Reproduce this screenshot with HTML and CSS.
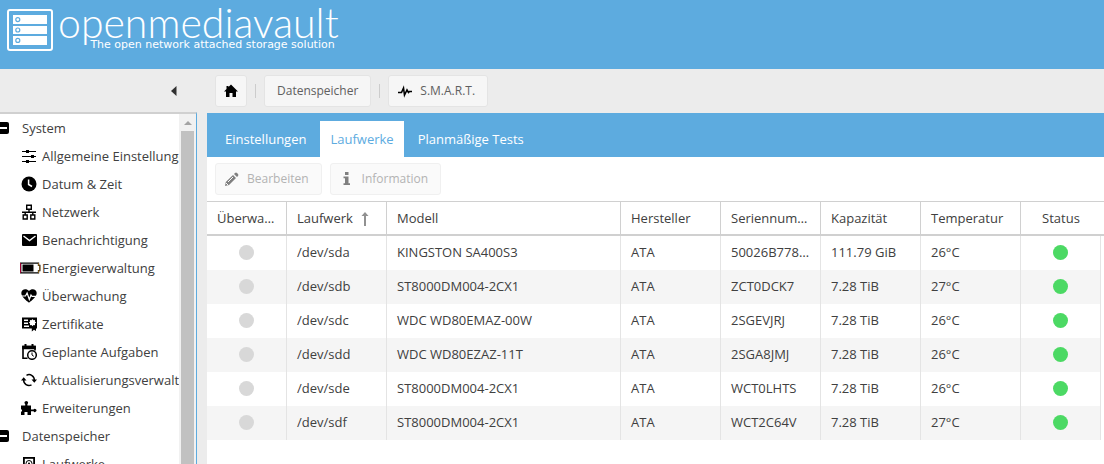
FILE: index.html
```html
<!DOCTYPE html>
<html lang="de">
<head>
<meta charset="utf-8">
<title>openmediavault</title>
<link rel="stylesheet" href="styles.css">
</head>
<body>
<header class="banner">
  <svg class="banner-logo" width="46" height="42" viewBox="0 0 46 42" aria-hidden="true">
    <rect x="1" y="1" width="44" height="40" rx="2" fill="none" stroke="#fff" stroke-width="2"/>
    <g fill="#fff"><rect x="6" y="6" width="34" height="9"/><rect x="6" y="17" width="34" height="8"/><rect x="6" y="27" width="34" height="9"/></g>
    <g fill="#fff" stroke="#5dabdf" stroke-width="1.2"><circle cx="10.8" cy="10.6" r="2"/><circle cx="10.8" cy="21" r="2"/><circle cx="10.8" cy="31.4" r="2"/></g>
  </svg>
  <div class="brand">
    <span class="brand-name">openmediavault</span>
    <span class="brand-tagline">The open network attached storage solution</span>
  </div>
</header>
<div class="workspace">
  <aside class="sidebar">
    <div class="sidebar-head">
      <button class="collapse" aria-label="Navigation einklappen"><svg width="6" height="10" viewBox="0 0 6 10"><path d="M5.5 0v10L0 5z" fill="#303030"/></svg></button>
    </div>
    <div class="tree-frame">
      <nav class="tree">
        <div class="group"><button class="toggle" aria-label="System zuklappen"></button>System</div>
        <a class="item" href="#"><svg class="icon" viewBox="0 0 16 16"><path d="M1 3.5h14M1 8.5h14M1 13.5h14" stroke="#000" stroke-width="1.2"/><path d="M5 2h3v3H5zM10 7h3v3h-3zM5 12h3v3H5z"/></svg>Allgemeine Einstellungen</a>
        <a class="item" href="#"><svg class="icon" viewBox="0 0 16 16"><circle cx="8" cy="8" r="7.5"/><path d="M7.6 3.5v5l3.4 2" fill="none" stroke="#fff" stroke-width="1.5"/></svg>Datum &amp; Zeit</a>
        <a class="item" href="#"><svg class="icon" viewBox="0 0 16 16"><g fill="none" stroke="#000" stroke-width="1.4"><path d="M5.7 1.2h4.6v4H5.7zM2.2 11h4v4h-4zM9.8 11h4v4h-4zM8 5v3M1 8.2h14M4.2 8v3M11.8 8v3"/></g></svg>Netzwerk</a>
        <a class="item" href="#"><svg class="icon" viewBox="0 0 16 16"><rect x="1" y="2" width="15" height="12" rx="1"/><path d="M2.5 4 8.5 8.5 14.5 4" fill="none" stroke="#fff" stroke-width="1.4"/></svg>Benachrichtigung</a>
        <a class="item" href="#"><svg class="icon icon-wide" viewBox="0 0 22 16"><path d="M.7 3.2h17.8v2.2h1.3v5.2h-1.3v2.2H.7z" fill="#fff" stroke="#000" stroke-width="1.3"/><path d="M.5 3v10" stroke="#a00030"/><path d="M18.5 3v2.5l1.3.3v4.5l-1.3.3V13" fill="none" stroke="#b98220" stroke-width=".7"/><path d="M2.5 4.5h11v7h-11z"/></svg>Energieverwaltung</a>
        <a class="item" href="#"><svg class="icon" viewBox="0 0 16 16"><path d="M8 14.8C5.5 12.8.3 9 .3 5.1.3.9 5.5-.1 8 3c2.5-3.1 7.7-2.1 7.7 2.1 0 3.9-5.2 7.7-7.7 9.7z"/><path d="M0 8h4.5l1.6-3 2.2 6.5L10 7l1 1.3h5" fill="none" stroke="#fff" stroke-width="1.2"/></svg>Überwachung</a>
        <a class="item" href="#"><svg class="icon" viewBox="0 0 16 16"><path d="M1 1.5h15v11h-1V15l-2-1.3-2.2 1.8v-3H1z"/><path d="M3 4.2h4M3 7.2h4M3 10.2h5" stroke="#fff" stroke-width="1.5"/><path d="m11.5 3 1 1.3 1.6-.3-.2 1.6 1.3 1-1.3 1 .2 1.6-1.6-.2-1 1.3-1-1.3-1.6.2.2-1.6-1.3-1 1.3-1-.2-1.6 1.6.3z" fill="#fff"/></svg>Zertifikate</a>
        <a class="item" href="#"><svg class="icon" viewBox="0 0 16 16"><path d="M6.5 14.2H2V2.5h12v4" fill="none" stroke="#000" stroke-width="1.6"/><path d="M1.2 1.7h13.6v3.5H1.2zM3.5 0h2v3h-2zM10.5 0h2v3h-2z"/><circle cx="11" cy="11" r="4.3" fill="#fff" stroke="#000" stroke-width="1.5"/><path d="M11 8.5V11l1.8 1.3" fill="none" stroke="#000"/></svg>Geplante Aufgaben</a>
        <a class="item" href="#"><svg class="icon" viewBox="0 0 16 16"><g fill="none" stroke="#000" stroke-width="1.5"><path d="M5.5 3.3a5.3 5.3 0 0 1 7.8 5.2M10.5 12.9a5.3 5.3 0 0 1-7.8-5.2"/></g><path d="M10.5 7.6H16l-2.7 3.2zM0 8.4h5.5L2.7 5.2z"/></svg>Aktualisierungsverwaltung</a>
        <a class="item" href="#"><svg class="icon" viewBox="0 0 16 16"><path d="M0 5.5h4.2V4a1.7 1.7 0 1 1 2.2 0v1.5H10v4h2.5a1.6 1.6 0 1 1 0 1.8H10V15H6.5v-3h-3v3H0v-3.5h1v-2H0z"/></svg>Erweiterungen</a>
        <div class="group"><button class="toggle" aria-label="Datenspeicher zuklappen"></button>Datenspeicher</div>
        <a class="item" href="#"><svg class="icon" viewBox="0 0 16 16"><rect x="2.9" y="1.9" width="10.2" height="13" fill="none" stroke="#000" stroke-width="1.8"/><circle cx="8" cy="7.5" r="3" fill="none" stroke="#000"/><circle cx="8" cy="7.5" r="1"/></svg>Laufwerke</a>
      </nav>
      <div class="scroll-track" aria-hidden="true"><span class="scroll-up"></span><span class="scroll-thumb"></span></div>
    </div>
  </aside>
  <main class="content">
    <nav class="crumbs">
      <button class="btn btn-home" aria-label="Startseite"><svg width="16" height="16" viewBox="0 0 16 16"><path d="M8 1.5 15 8.5h-2V14H9.5v-4h-3v4H3V8.5H1L3.500 6V3h2v1z"/></svg></button>
      <span class="divider"></span>
      <button class="btn">Datenspeicher</button>
      <span class="divider"></span>
      <button class="btn btn-icon"><svg width="16" height="16" viewBox="0 0 16 16"><path d="M1 9.5h3.500L6.500 5l1 7L10 7l1.500 2.500 1-1H15" fill="none" stroke="#000" stroke-width="1.600"/></svg>S.M.A.R.T.</button>
    </nav>
    <section class="panel">
      <div class="tabs" role="tablist">
        <button class="tab" role="tab">Einstellungen</button>
        <button class="tab tab-active" role="tab" aria-selected="true">Laufwerke</button>
        <button class="tab" role="tab">Planmäßige Tests</button>
      </div>
      <div class="toolbar">
        <button class="btn btn-icon" disabled><svg width="16" height="16" viewBox="0 0 16 16"><path d="m1 15 .8-4L9 4l3 3-7 7zM10 3l1-1q1-.8 2 0l1 1q.8 1 0 2l-1 1z"/><path d="m2 12 2 2M4 11l5-5" stroke="#fafafa"/></svg>Bearbeiten</button>
        <button class="btn btn-icon" disabled><svg width="16" height="16" viewBox="0 0 16 16"><path d="M6 1h3.500v3H6zM4.500 5.500h5v6.700H11V14H4.500v-1.800H6V7.300H4.500z"/></svg>Information</button>
      </div>
      <table class="grid">
        <colgroup><col class="w-narrow"><col class="w-mid"><col><col class="w-mid"><col class="w-mid"><col class="w-mid"><col class="w-mid"><col class="w-narrow"><col class="w-gutter"></colgroup>
        <thead><tr><th>Überwacht</th><th>Laufwerk <svg class="sort" width="8" height="14" viewBox="0 0 8 14"><path d="M4 0 7.500 4H5v10H3V4H.5z" fill="#919191"/></svg></th><th>Modell</th><th>Hersteller</th><th>Seriennummer</th><th>Kapazität</th><th>Temperatur</th><th class="center">Status</th><td class="gutter"></td></tr></thead>
        <tbody>
          <tr><td class="center"><span class="dot"></span></td><td>/dev/sda</td><td>KINGSTON SA400S3</td><td>ATA</td><td>50026B7782A1</td><td>111.79 GiB</td><td>26°C</td><td class="center"><span class="dot dot-good"></span></td><td class="gutter"></td></tr>
          <tr><td class="center"><span class="dot"></span></td><td>/dev/sdb</td><td>ST8000DM004-2CX1</td><td>ATA</td><td>ZCT0DCK7</td><td>7.28 TiB</td><td>27°C</td><td class="center"><span class="dot dot-good"></span></td><td class="gutter"></td></tr>
          <tr><td class="center"><span class="dot"></span></td><td>/dev/sdc</td><td>WDC WD80EMAZ-00W</td><td>ATA</td><td>2SGEVJRJ</td><td>7.28 TiB</td><td>26°C</td><td class="center"><span class="dot dot-good"></span></td><td class="gutter"></td></tr>
          <tr><td class="center"><span class="dot"></span></td><td>/dev/sdd</td><td>WDC WD80EZAZ-11T</td><td>ATA</td><td>2SGA8JMJ</td><td>7.28 TiB</td><td>26°C</td><td class="center"><span class="dot dot-good"></span></td><td class="gutter"></td></tr>
          <tr><td class="center"><span class="dot"></span></td><td>/dev/sde</td><td>ST8000DM004-2CX1</td><td>ATA</td><td>WCT0LHTS</td><td>7.28 TiB</td><td>26°C</td><td class="center"><span class="dot dot-good"></span></td><td class="gutter"></td></tr>
          <tr><td class="center"><span class="dot"></span></td><td>/dev/sdf</td><td>ST8000DM004-2CX1</td><td>ATA</td><td>WCT2C64V</td><td>7.28 TiB</td><td>27°C</td><td class="center"><span class="dot dot-good"></span></td><td class="gutter"></td></tr>
        </tbody>
      </table>
    </section>
  </main>
</div>
</body>
</html>
```
FILE: styles.css
```css
* { box-sizing: border-box; }
body {
  margin: 0;
  height: 100vh;
  overflow: hidden;
  display: flex;
  flex-direction: column;
  background: #ececec;
  color: #404040;
  font: 13px/20px "Open Sans", sans-serif;
}
button { font: inherit; margin: 0; }

.banner {
  flex: none;
  display: flex;
  align-items: flex-start;
  gap: 5px;
  padding: 9px 7px 15px;
  background: #5dabdf;
  color: #fff;
}
.banner-logo { flex: none; }
.brand { display: flex; flex-direction: column; align-items: flex-end; }
.brand-name { font: 300 41px/27px Lato, sans-serif; }
.brand-tagline { font: 11px/18px "DejaVu Sans", sans-serif; padding-right: 4px; }

.workspace { flex: 1; min-height: 0; display: flex; }
.sidebar {
  flex: none;
  width: 197px;
  display: flex;
  flex-direction: column;
}
.sidebar-head {
  height: 43px;
  display: flex;
  align-items: center;
  justify-content: flex-end;
  padding-right: 18px;
}
.collapse {
  display: flex;
  padding: 0 2px;
  border: 0;
  background: none;
}
.tree-frame {
  flex: 1;
  min-height: 0;
  display: flex;
  border-top: 2px solid #d0d0d0;
  border-right: 1px solid #5dabdf;
  background: #fff;
}
.tree { flex: 1; min-width: 0; overflow: hidden; }
.group, .item {
  height: 28px;
  display: flex;
  align-items: center;
  white-space: nowrap;
}
.group { gap: 13px; }
.item {
  padding-left: 21px;
  gap: 5px;
  color: inherit;
  text-decoration: none;
}
.icon { flex: none; width: 16px; height: 16px; }
.icon-wide { width: 22px; margin: 0 -5px 0 -1px; }
.toggle {
  width: 9px;
  height: 12px;
  padding: 0;
  border: 0;
  border-radius: 0 2px 2px 0;
  background: linear-gradient(#fff, #fff) left center / 7px 2px no-repeat #000;
}
.scroll-track {
  width: 17px;
  display: flex;
  flex-direction: column;
  align-items: center;
  background: #f1f1f1;
}
.scroll-up {
  margin: 7px 0 6px;
  border: 4px solid transparent;
  border-top: 0;
  border-bottom-color: #a3a3a3;
}
.scroll-thumb { flex: 1; width: 13px; background: #c1c1c1; }

.content {
  flex: 1;
  min-width: 0;
  display: flex;
  flex-direction: column;
  padding-left: 10px;
}
.crumbs {
  height: 44px;
  display: flex;
  align-items: center;
  gap: 8px;
  padding-left: 8px;
}
.divider { width: 1px; height: 14px; background: #ccc; }
.btn {
  height: 32px;
  display: flex;
  align-items: center;
  padding: 0 12px;
  border: 1px solid #e4e4e4;
  border-radius: 3px;
  background: #f6f6f6;
  color: #606060;
  font-size: 12px;
}
.btn-home { padding: 0 7px; }
.btn-icon { gap: 7px; padding-left: 8px; }
.btn:disabled {
  border-color: #f0f0f0;
  background: #fafafa;
  color: #b3b3b3;
}
.btn:disabled svg { fill: #808080; }

.panel { flex: 1; background: #fff; }
.tabs {
  height: 44px;
  display: flex;
  padding: 8px 8px 0;
  gap: 4px;
  background: #5dabdf;
}
.tab {
  padding: 0 10px;
  border: 0;
  background: none;
  color: #fff;
}
.tab-active { background: #fff; color: #5dabdf; }
.toolbar { display: flex; gap: 8px; padding: 6px 8px; }

.grid {
  width: 100%;
  table-layout: fixed;
  border-collapse: separate;
  border-spacing: 0;
}
.w-narrow { width: 80px; }
.w-mid { width: 100px; }
.w-gutter { width: 3px; }
.grid th, .grid td {
  height: 34px;
  padding: 0 10px 2px;
  border-right: 1px solid #e4e4e4;
  overflow: hidden;
  text-align: left;
  text-overflow: ellipsis;
  white-space: nowrap;
  font-weight: 400;
}
.grid thead th, .grid thead td {
  height: 35px;
  padding-bottom: 0;
  border-top: 1px solid #d0d0d0;
  border-right-color: #d0d0d0;
  border-bottom: 2px solid #d0d0d0;
}
.grid tbody tr:nth-child(even) td { background: #f5f5f5; }
.grid .center { text-align: center; }
.grid thead .center { border-right: 0; }
.grid .gutter, .grid tbody tr:nth-child(even) .gutter {
  padding: 0;
  border-right: 0;
  background: #fff;
}
.sort { margin-left: 5px; vertical-align: -3px; }
.dot {
  display: block;
  width: 15px;
  height: 15px;
  margin: 0 auto;
  border-radius: 50%;
  background: #d8d8d8;
}
.dot-good { background: #4cd964; }
```
